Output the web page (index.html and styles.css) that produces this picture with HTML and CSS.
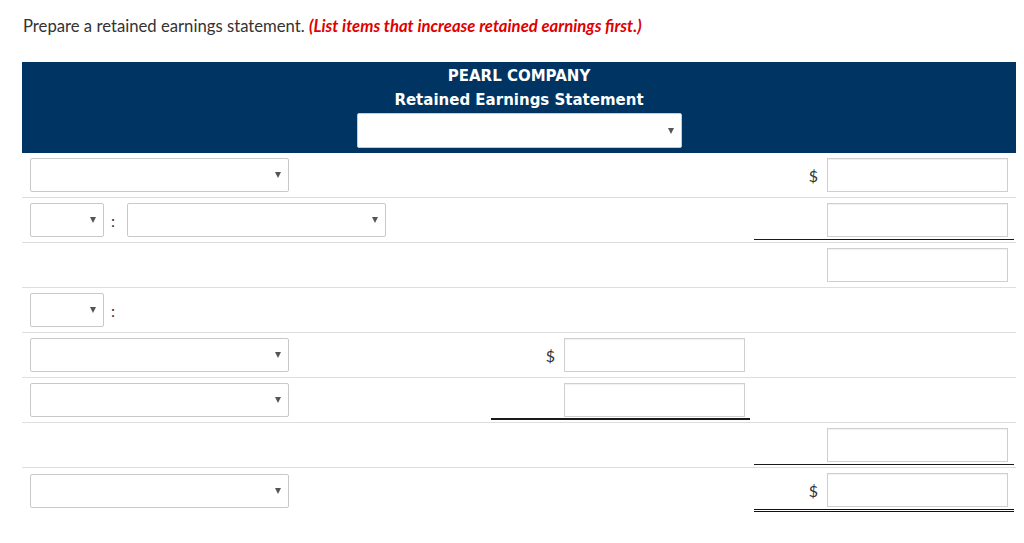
FILE: index.html
```html
<!DOCTYPE html>
<html lang="en">
<head>
<meta charset="utf-8">
<title>Retained Earnings Statement</title>
<link rel="stylesheet" href="styles.css">
</head>
<body>
<p class="prompt">Prepare a retained earnings statement. <em class="note">(List items that increase retained earnings first.)</em></p>

<div class="sheet">
  <div class="head">
    <div class="title">PEARL COMPANY</div>
    <div class="title">Retained Earnings Statement</div>
    <div class="sel sel-head"><span class="arrow"></span></div>
  </div>

  <div class="row">
    <div class="c1"><div class="sel sel-lg"><span class="arrow"></span></div></div>
    <div class="c2"></div>
    <div class="c3"><div class="amt"><span class="dol">$</span><span class="inp"></span></div></div>
  </div>

  <div class="row">
    <div class="c1"><div class="sel sel-sm"><span class="arrow"></span></div><span class="colon">:</span><div class="sel sel-lg"><span class="arrow"></span></div></div>
    <div class="c2"></div>
    <div class="c3 ul"><div class="amt"><span class="inp"></span></div></div>
  </div>

  <div class="row">
    <div class="c1"></div>
    <div class="c2"></div>
    <div class="c3"><div class="amt"><span class="inp"></span></div></div>
  </div>

  <div class="row">
    <div class="c1"><div class="sel sel-sm"><span class="arrow"></span></div><span class="colon">:</span></div>
    <div class="c2"></div>
    <div class="c3"></div>
  </div>

  <div class="row">
    <div class="c1"><div class="sel sel-lg"><span class="arrow"></span></div></div>
    <div class="c2"><div class="amt"><span class="dol">$</span><span class="inp"></span></div></div>
    <div class="c3"></div>
  </div>

  <div class="row">
    <div class="c1"><div class="sel sel-lg"><span class="arrow"></span></div></div>
    <div class="c2 ul ul2"><div class="amt"><span class="inp"></span></div></div>
    <div class="c3"></div>
  </div>

  <div class="row">
    <div class="c1"></div>
    <div class="c2"></div>
    <div class="c3 ul"><div class="amt"><span class="inp"></span></div></div>
  </div>

  <div class="row last">
    <div class="c1"><div class="sel sel-lg"><span class="arrow"></span></div></div>
    <div class="c2"></div>
    <div class="c3 dul"><div class="amt"><span class="dol">$</span><span class="inp"></span></div></div>
  </div>
</div>
</body>
</html>
```

FILE: styles.css
```css
html, body {
  margin: 0;
  padding: 0;
  background: #fff;
}

body {
  font-family: Lato, "Liberation Sans", sans-serif;
  color: #333;
}

.prompt {
  margin: 0;
  padding: 16px 0 0 23px;
  font-size: 16.7px;
  line-height: 20px;
  height: 62px;
  box-sizing: border-box;
  color: #333;
}

.note {
  color: #e00000;
  font-weight: 700;
  font-style: italic;
}

.sheet {
  margin-left: 22px;
  width: 994px;
}

.head {
  background: #003462;
  padding: 2px 0 5px;
  display: flex;
  flex-direction: column;
  align-items: center;
}

.title {
  font-family: "DejaVu Sans", Verdana, sans-serif;
  font-weight: 700;
  font-size: 15px;
  line-height: 24px;
  color: #fff;
}

.sel {
  position: relative;
  box-sizing: border-box;
  height: 34px;
  background: #fff;
  border: 1px solid #c9c9c9;
  border-radius: 2px;
  flex: none;
}

.sel-head {
  width: 325px;
  height: 35px;
  margin-top: 1px;
  margin-left: 1px;
}

.sel-lg {
  width: 259px;
}

.sel-sm {
  width: 74px;
}

.arrow {
  position: absolute;
  right: 7px;
  top: 50%;
  margin-top: -3px;
  width: 0;
  height: 0;
  border-left: 3.5px solid transparent;
  border-right: 3.5px solid transparent;
  border-top: 6px solid #555;
}

.row {
  display: flex;
  border-bottom: 1px solid #dedede;
}

.row.last {
  border-bottom: none;
}

.c1, .c2, .c3 {
  box-sizing: border-box;
  padding: 5px 0;
  min-height: 44px;
}

.c1 {
  width: 467px;
  padding-left: 8px;
  display: flex;
  align-items: center;
}

.c2 {
  width: 263px;
}

.c3 {
  width: 264px;
}

.colon {
  width: 23px;
  box-sizing: border-box;
  padding-left: 7px;
  font-size: 16px;
  color: #333;
}

.amt {
  display: flex;
  justify-content: flex-end;
  align-items: center;
  margin: 0 2px;
  padding-right: 6px;
}

.c2 .amt {
  padding-right: 5px;
}

.dol {
  font-size: 16px;
  color: #333;
  margin-right: 9px;
}

.inp {
  display: block;
  box-sizing: border-box;
  width: 181px;
  height: 34px;
  background: #fff;
  border: 1px solid #cfcfcf;
  box-shadow: inset 0 1px 1px rgba(0, 0, 0, 0.06);
}

.ul {
  padding-bottom: 2px;
}

.ul .amt {
  padding-bottom: 2px;
  border-bottom: 1px solid #1a1a1a;
}

.ul2 .amt {
  border-bottom-width: 2px;
  padding-bottom: 1px;
}

.dul {
  padding-bottom: 1px;
}

.dul .amt {
  padding-bottom: 2px;
  border-bottom: 3px double #111;
}
```
